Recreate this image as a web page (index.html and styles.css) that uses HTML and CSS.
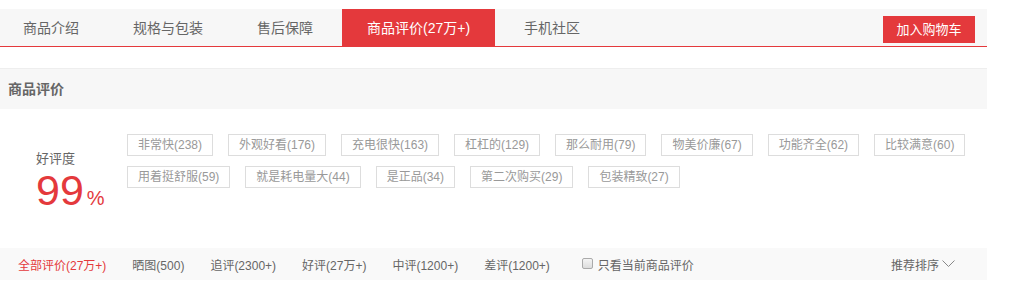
FILE: index.html
```html
<!DOCTYPE html>
<html lang="zh-CN">
<head>
  <meta charset="UTF-8">
  <title>商品评价</title>
  <link rel="stylesheet" href="styles.css">
</head>
<body>
  <div class="wrap">
    <div class="tabbar">
      <ul class="tabs">
        <li>商品介绍</li>
        <li>规格与包装</li>
        <li>售后保障</li>
        <li class="active">商品评价(27万+)</li>
        <li>手机社区</li>
      </ul>
      <div class="cart-btn">加入购物车</div>
    </div>

    <div class="sec-title">商品评价</div>

    <div class="rate">
      <div class="rate-left">
        <div class="rate-label">好评度</div>
        <div class="rate-num">99<span>%</span></div>
      </div>
      <div class="tags">
        <span class="tag">非常快(238)</span>
        <span class="tag">外观好看(176)</span>
        <span class="tag">充电很快(163)</span>
        <span class="tag">杠杠的(129)</span>
        <span class="tag">那么耐用(79)</span>
        <span class="tag">物美价廉(67)</span>
        <span class="tag">功能齐全(62)</span>
        <span class="tag">比较满意(60)</span>
        <span class="tag">用着挺舒服(59)</span>
        <span class="tag">就是耗电量大(44)</span>
        <span class="tag">是正品(34)</span>
        <span class="tag">第二次购买(29)</span>
        <span class="tag">包装精致(27)</span>
      </div>
    </div>

    <div class="filter">
      <span class="f-item current">全部评价(27万+)</span>
      <span class="f-item">晒图(500)</span>
      <span class="f-item">追评(2300+)</span>
      <span class="f-item">好评(27万+)</span>
      <span class="f-item">中评(1200+)</span>
      <span class="f-item">差评(1200+)</span>
      <label class="only-cur"><i class="chk"></i>只看当前商品评价</label>
      <div class="sort">推荐排序
        <svg width="13" height="8" viewBox="0 0 13 8"><polyline points="0.5,0.5 6.5,6.5 12.5,0.5" fill="none" stroke="#888" stroke-width="1"/></svg>
      </div>
    </div>
  </div>
</body>
</html>
```

FILE: styles.css
```css
body {
  margin: 0;
  background: #fff;
  font-family: "Liberation Sans", "Noto Sans CJK SC", sans-serif;
}
.wrap {
  width: 987px;
  padding-top: 9px;
}
.tabbar {
  display: flex;
  align-items: flex-start;
  height: 37px;
  background: #f7f7f7;
  border-bottom: 1px solid #e4393c;
}
.tabs {
  display: flex;
  list-style: none;
  margin: 0;
  padding: 0;
}
.tabs li {
  padding: 0 25px;
  margin-right: 4px;
  line-height: 38px;
  height: 38px;
  font-size: 14px;
  color: #666;
}
.tabs li:first-child {
  padding-left: 23px;
}
.tabs li.active {
  background: #e4393c;
  color: #fff;
}
.cart-btn {
  margin: 7px 12px 0 auto;
  width: 92px;
  height: 27px;
  line-height: 27px;
  text-align: center;
  background: #e4393c;
  color: #fff;
  font-size: 13px;
}
.sec-title {
  margin-top: 21px;
  height: 40px;
  line-height: 40px;
  border-top: 1px solid #eee;
  background: #f7f7f7;
  padding-left: 8px;
  font-size: 14px;
  font-weight: bold;
  color: #666;
}
.rate {
  display: flex;
  height: 114px;
  padding-top: 25px;
}
.rate-left {
  width: 127px;
  flex-shrink: 0;
  box-sizing: border-box;
  padding: 16px 0 0 36px;
}
.rate-label {
  font-size: 13px;
  line-height: 18px;
  color: #666;
}
.rate-num {
  margin-top: 1px;
  font-size: 43px;
  line-height: 43px;
  color: #e4393c;
}
.rate-num span {
  font-size: 20px;
  margin-left: 3px;
}
.tags {
  flex: 1;
  display: flex;
  flex-wrap: wrap;
  align-content: flex-start;
  gap: 10px 15px;
}
.tag {
  height: 20px;
  line-height: 20px;
  padding: 0 10px;
  border: 1px solid #ddd;
  font-size: 12px;
  color: #999;
}
.filter {
  display: flex;
  align-items: center;
  height: 32px;
  background: #f9f9f9;
  padding-left: 18px;
  font-size: 12px;
  color: #666;
}
.f-item {
  margin-right: 26px;
}
.f-item.current {
  color: #e4393c;
}
.only-cur {
  display: flex;
  align-items: center;
  margin-left: 6px;
}
.chk {
  width: 11px;
  height: 11px;
  margin-right: 5px;
  margin-top: -2px;
  border: 1px solid #aaa;
  border-radius: 2px;
  background: linear-gradient(#f4f4f4, #ddd);
  box-sizing: border-box;
}
.sort {
  margin-left: auto;
  padding-right: 32px;
  display: flex;
  align-items: center;
  gap: 3px;
}
```
